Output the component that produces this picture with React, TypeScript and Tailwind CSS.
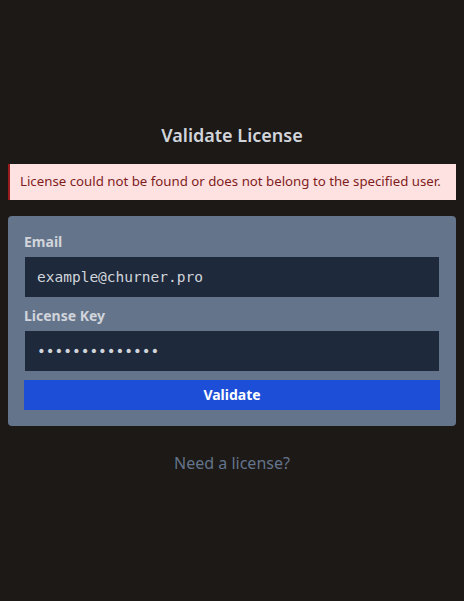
import { useState } from "react";

export default function App() {
  const [email, setEmail] = useState("example@churner.pro");
  const [licenseKey, setLicenseKey] = useState("abcdefghijklmn");

  return (
    <div className="min-h-screen bg-[#1c1917] px-2 pt-[121px] font-['Noto_Sans',sans-serif]">
      <h1 className="text-center text-lg leading-7 font-semibold text-[#d1d5db]">
        Validate License
      </h1>

      <div className="mt-[15px] flex h-9 items-center border-l-2 border-[#991b1b] bg-[#fee2e2] px-2.5 text-[13.25px] whitespace-nowrap text-[#7f1d1d]">
        License could not be found or does not belong to the specified user.
      </div>

      <form
        className="mt-4 rounded-sm bg-[#64748b] p-4"
        onSubmit={(e) => e.preventDefault()}
      >
        <label className="mb-1 block text-sm leading-5 font-bold text-[#d1d5db]">
          Email
        </label>
        <input
          type="email"
          value={email}
          onChange={(e) => setEmail(e.target.value)}
          className="block h-[42px] w-full border border-[#64748b] bg-[#1e293b] px-3 font-['DejaVu_Sans_Mono',monospace] text-[14.5px] text-[#d1d5db] outline-none"
        />

        <label className="mt-2 mb-1 block text-sm leading-5 font-bold text-[#d1d5db]">
          License Key
        </label>
        <input
          type="password"
          value={licenseKey}
          onChange={(e) => setLicenseKey(e.target.value)}
          className="block h-[42px] w-full border border-[#64748b] bg-[#1e293b] px-3 font-['DejaVu_Sans_Mono',monospace] text-[14.5px] text-[#d1d5db] outline-none"
        />

        <button
          type="submit"
          className="mt-2 flex h-[30px] w-full items-center justify-center bg-[#1d4ed8] text-sm font-bold text-white"
        >
          Validate
        </button>
      </form>

      <div className="mt-[25px] text-center">
        <a href="#" className="text-base leading-6 text-[#64748b]">
          Need a license?
        </a>
      </div>
    </div>
  );
}
